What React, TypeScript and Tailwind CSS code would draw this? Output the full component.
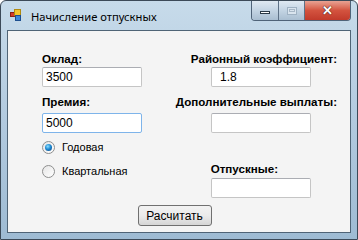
import React from "react";

function Field({ value, focused, className = "" }: { value?: string; focused?: boolean; className?: string }) {
  return (
    <div
      className={`h-[20px] w-[100px] bg-white border ${focused ? "border-[#7eb4ea]" : "border-[#c5c5c5] border-t-[#abadb3]"} rounded-[2px] flex items-center pl-[3px] text-[12px] text-black ${className}`}
    >
      {value}
    </div>
  );
}

function Radio({ checked, label }: { checked?: boolean; label: string }) {
  return (
    <div className="flex items-center h-[14px]">
      <div className="w-[13px] h-[13px] rounded-full border border-[#8e8f8f] bg-gradient-to-br from-[#e6e6e6] to-[#ffffff] flex items-center justify-center">
        {checked && (
          <div className="w-[7px] h-[7px] rounded-full bg-[radial-gradient(circle_at_40%_35%,#8be0ff_0%,#1f8ad3_45%,#0b3f7a_100%)]" />
        )}
      </div>
      <span className="ml-[7px] text-[11px] leading-[14px] text-black">{label}</span>
    </div>
  );
}

export default function App() {
  return (
    <div
      className="w-[358px] h-[240px] relative overflow-hidden rounded-t-[6px] border border-[#3c4a58] bg-gradient-to-b from-[#c7dbea] via-[#b2cadf] to-[#9ebbd3] flex flex-col"
      style={{ fontFamily: '"Liberation Sans", Arial, sans-serif' }}
    >
      {/* title bar */}
      <div className="h-[29px] flex items-start relative">
        <div className="mt-[8px] ml-[9px] w-[12px] h-[12px] relative">
          <div className="absolute left-0 top-[3px] w-[5px] h-[5px] bg-[#d43a2a] border border-[#8a2015]" />
          <div className="absolute left-[4px] top-0 w-[7px] h-[7px] bg-[#f3c52c] border border-[#b08a10]" />
          <div className="absolute left-[5px] top-[6px] w-[6px] h-[6px] bg-[#3c86d8] border border-[#1d4f8f]" />
        </div>
        <span
          className="ml-[9px] mt-[8px] text-[11.2px] leading-[16px] text-black"
          style={{ fontFamily: '"Noto Sans", "Open Sans", sans-serif' }}
        >
          Начисление отпускных
        </span>
        <div className="absolute right-[6px] top-0 flex h-[20px] rounded-b-[4px] border border-t-0 border-[#4f6378] overflow-hidden">
          <div className="w-[27px] h-full bg-gradient-to-b from-[#dfe9f2] via-[#c3d4e3] to-[#a9bed1] flex items-center justify-center border-r border-[#5d7186]">
            <div className="w-[10px] h-[3px] mt-[4px] bg-white border border-[#2a3946]" />
          </div>
          <div className="w-[26px] h-full bg-gradient-to-b from-[#dfe9f2] via-[#c3d4e3] to-[#a9bed1] flex items-center justify-center border-r border-[#5d7186]">
            <div className="w-[10px] h-[8px] border border-[#9fb2c3] bg-[#d9e4ee] flex items-center justify-center">
              <div className="w-[6px] h-[3px] border border-[#a8b8c7]" />
            </div>
          </div>
          <div className="w-[45px] h-full bg-gradient-to-b from-[#e8a293] via-[#d3533f] to-[#c13a2b] flex items-center justify-center">
            <span className="text-white font-bold text-[13px] leading-none" style={{ textShadow: "0 0 1px #3a1510, 0 0 1px #3a1510" }}>
              ✕
            </span>
          </div>
        </div>
      </div>

      {/* client area */}
      <div className="mx-[6px] mb-[6px] flex-1 border border-[#4f6476] bg-[#f4f4f4] relative">
        <div className="flex pt-[20px]">
          {/* left column */}
          <div className="ml-[34px] w-[100px] flex flex-col">
            <span className="text-[11.6px] leading-[15px] font-bold text-black">Оклад:</span>
            <Field value="3500" className="mt-[1px]" />
            <span className="mt-[7px] text-[11.6px] leading-[15px] font-bold text-black">Премия:</span>
            <Field value="5000" focused className="mt-[4px]" />
            <div className="mt-[7px] flex flex-col gap-[10px]">
              <Radio checked label="Годовая" />
              <Radio label="Квартальная" />
            </div>
          </div>
          {/* right column */}
          <div className="ml-[20px] w-[175px] flex flex-col items-end">
            <span className="text-[11.6px] leading-[15px] font-bold text-black text-right">Районный коэффициент:</span>
            <Field value="1.8" className="mt-[1px] mr-[26px] pl-[8px]" />
            <span className="mt-[7px] text-[11.6px] leading-[15px] font-bold text-black text-right">Дополнительные выплаты:</span>
            <Field className="mt-[4px] mr-[26px]" />
            <span className="mt-[28px] mr-[59px] text-[11.6px] leading-[15px] font-bold text-black">Отпускные:</span>
            <Field className="mt-[2px] mr-[26px]" />
          </div>
        </div>
        <div className="flex justify-center pr-[9px] mt-[7px]">
          <div className="w-[74px] h-[21px] rounded-[3px] border border-[#707070] bg-gradient-to-b from-[#f2f2f2] via-[#ebebeb] to-[#d6d6d6] flex items-center justify-center text-[12px] text-black">
            Расчитать
          </div>
        </div>
      </div>
    </div>
  );
}
